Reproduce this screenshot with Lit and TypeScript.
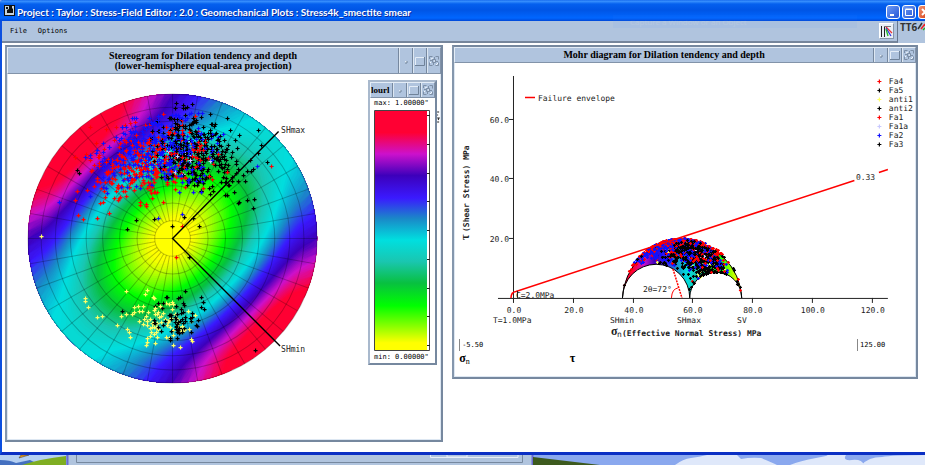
import { LitElement, html, svg, css } from "lit";
import { customElement } from "lit/decorators.js";

type Stop = [number, string];

/* Dilation tendency colour scale, from 0 (yellow) to 1 (red). */
const SCALE: Stop[] = [
  [0, "#ffff00"], [0.03, "#ffff00"], [0.1, "#88ff00"], [0.185, "#00ff00"],
  [0.28, "#08c040"], [0.37, "#1ac6b0"], [0.46, "#00dfdf"], [0.55, "#1a88c8"],
  [0.636, "#3a1aff"], [0.73, "#3d00bb"], [0.82, "#cc11cc"], [0.91, "#ff0033"],
  [1, "#ff0033"],
];

const channels = (c: string) => [1, 3, 5].map((i) => parseInt(c.slice(i, i + 2), 16));

function colourAt(v: number): string {
  for (let i = 1; i < SCALE.length; i++) {
    const [hi, ch] = SCALE[i];
    const [lo, cl] = SCALE[i - 1];
    if (v <= hi) {
      const t = (v - lo) / (hi - lo);
      const a = channels(cl);
      const b = channels(ch);
      return `rgb(${a.map((x, k) => Math.round(x + (b[k] - x) * t)).join(",")})`;
    }
  }
  return "#ff0033";
}

/* Stereonet geometry: equal-area, lower hemisphere. */
const CX = 172.5;
const CY = 238.5;
const R = 144.5;

/* Principal effective stresses, MPa. */
const SV = 76.2;
const SHMAX = 58.8;
const SHMIN = 36.3;
const RATIO = (SV - SHMAX) / (SV - SHMIN);

function contour(v: number): string {
  const pts: string[] = [];
  for (let d = 0; d < 360; d += 3) {
    const a = (d * Math.PI) / 180;
    const m = Math.cos(a - Math.PI / 4) ** 2;
    const q = v / (m + (1 - m) * RATIO);
    const rho = q >= 1 ? 1 : Math.sqrt(1 - Math.sqrt(1 - q));
    pts.push(`${(CX + R * rho * Math.cos(a)).toFixed(1)} ${(CY + R * rho * Math.sin(a)).toFixed(1)}`);
  }
  return `M${pts.join("L")}Z`;
}

const LEVELS = Array.from({ length: 110 }, (_, i) => 0.93 - (i * 0.91) / 109);

/* Repeatable pseudo-random numbers for the sampled fault poles. */
let seed = 20117;
const rnd = () => {
  seed = (seed * 1664525 + 1013904223) % 4294967296;
  return seed / 4294967296;
};
const gauss = () => Math.sqrt(-2 * Math.log(1 - rnd())) * Math.cos(2 * Math.PI * rnd());

interface Pole { x: number; y: number; c: string }

function cluster(n: number, c: string, x: number, y: number, sx: number, sy: number, tilt = 0): Pole[] {
  return Array.from({ length: n }, () => {
    const u = Math.max(-2.3, Math.min(2.3, gauss()));
    const w = Math.max(-2, Math.min(2, gauss()));
    return { c, x: Math.round(x + u * sx), y: Math.round(y + w * sy + u * tilt) };
  });
}

const RED = "#ff0000";
const BLUE = "#1010ff";
const BLACK = "#000000";
const PALE = "#c8c8ff";
const YELLOW = "#ffff66";

const POLES: Pole[] = [];
for (let i = 0; i < 12; i++) {
  POLES.push(
    ...cluster(16, RED, 152, 154, 27, 19, -4),
    ...cluster(10, RED, 130, 177, 24, 16, -5),
    ...cluster(24, BLUE, 160, 150, 25, 17, -2),
    ...cluster(6, BLUE, 127, 158, 20, 16, -3),
    ...cluster(16, BLACK, 184, 150, 15, 15, 2),
    ...cluster(15, BLACK, 210, 154, 21, 20, 7),
    ...cluster(1, PALE, 184, 160, 12, 12),
  );
}
POLES.push(
  ...cluster(30, BLUE, 190, 152, 30, 20),
  ...cluster(20, RED, 195, 160, 18, 14),
  ...cluster(75, YELLOW, 158, 320, 19, 12, 3),
  ...cluster(62, BLACK, 179, 319, 11, 11),
  ...cluster(10, YELLOW, 165, 320, 12, 10, 3),
);
const SINGLES: [string, number, number][] = [
  [BLACK, 77, 170], [BLACK, 79, 173], [BLACK, 183, 105], [BLACK, 192, 104], [BLACK, 227, 118],
  [RED, 87, 190], [RED, 97, 218], [BLUE, 59, 202], [YELLOW, 41, 236], [BLACK, 127, 229],
  [BLACK, 136, 220], [BLACK, 154, 219], [BLUE, 158, 218], [BLUE, 182, 214], [BLACK, 184, 217],
  [BLACK, 172, 226], [RED, 182, 226], [BLACK, 199, 226], [BLACK, 193, 218], [RED, 271, 166],
  [BLACK, 267, 162], [BLUE, 257, 166], [BLACK, 261, 145], [BLACK, 247, 200], [RED, 176, 257],
  [BLACK, 189, 257], [BLACK, 255, 350], [BLACK, 185, 291], [BLACK, 203, 302], [YELLOW, 85, 298],
  [YELLOW, 85, 301], [YELLOW, 88, 307], [YELLOW, 147, 290], [YELLOW, 153, 297], [YELLOW, 97, 317],
  [YELLOW, 102, 316], [YELLOW, 117, 325], [BLACK, 122, 311], [YELLOW, 130, 337], [YELLOW, 146, 345],
];
POLES.push(...SINGLES.map(([c, x, y]) => ({ c, x, y })));

/* Adjacent poles of one colour share a path, which keeps the drawing order. */
function crosses(poles: Pole[], size: number) {
  const runs: { c: string; d: string }[] = [];
  for (const p of poles) {
    const x = p.x + 0.5;
    const y = p.y + 0.5;
    const d = `M${x - size} ${y}h${2 * size}M${x} ${y - size}v${2 * size}`;
    const last = runs[runs.length - 1];
    if (last && last.c === p.c) last.d += d;
    else runs.push({ c: p.c, d });
  }
  return runs.map((r) => svg`<path class="cross" stroke=${r.c} d=${r.d} />`);
}

/* Mohr diagram axes. */
const X0 = 514;
const Y0 = 298;
const UNIT = 2.99;
const mx = (s: number) => X0 + s * UNIT;
const my = (t: number) => Y0 - t * UNIT;

function mohr(p: Pole): Pole {
  const dx = (p.x - CX) / R;
  const dy = (p.y - CY) / R;
  const r2 = Math.min(1, dx * dx + dy * dy);
  const h = r2 * (2 - r2);
  const m = Math.cos(Math.atan2(dy, dx) - Math.PI / 4) ** 2;
  const a = h * m;
  const b = h * (1 - m);
  const v = 1 - h;
  const s = SHMIN * a + SHMAX * b + SV * v;
  const t = Math.sqrt(Math.max(0, SHMIN ** 2 * a + SHMAX ** 2 * b + SV ** 2 * v - s * s));
  return { c: p.c, x: Math.round(mx(s) - 0.5), y: Math.round(my(t)) };
}

/* Light symbols go first so that the dense dark sets stay readable. */
const MOHR_POLES = [
  ...POLES.filter((p) => p.c === YELLOW),
  ...POLES.filter((p) => p.c !== YELLOW),
].map(mohr);

const arc = (from: number, to: number, sweep: number) => {
  const r = ((Math.abs(to - from) / 2) * UNIT).toFixed(1);
  return `A${r} ${r} 0 0 ${sweep} ${mx(to).toFixed(1)} ${Y0}`;
};
const MOHR_AREA =
  `M${mx(SHMIN).toFixed(1)} ${Y0}` + arc(SHMIN, SV, 1) + arc(SV, SHMAX, 0) + arc(SHMAX, SHMIN, 0) + "Z";

const KEY: [string, string][] = [
  ["Fa4", RED], ["Fa5", BLACK], ["anti1", YELLOW], ["anti2", BLACK],
  ["Fa1", RED], ["Fa1a", PALE], ["Fa2", BLUE], ["Fa3", BLACK],
];

const stops = SCALE.map(([v, c]) => svg`<stop offset=${1 - v} stop-color=${c} />`).reverse();

const tools = html`
  <div class="tools">
    <button aria-label="Iconify"><svg width="13" height="14"><path d="M6 7h2v2h-2z" fill="#e4edf7" /><path d="M8 7v2h-2" stroke="#6f8299" fill="none" /></svg></button>
    <button aria-label="Maximize"><svg width="13" height="14"><path d="M2.500 11V3.500h9" stroke="#e4edf7" fill="none" /><path d="M2 11.500h9.500V3" stroke="#6f8299" fill="none" /></svg></button>
    <button aria-label="Detach"><svg width="13" height="14"><path d="M2.500 5V2.500h3M8.500 2.500h3v3M11.500 8.500v3h-3M5.500 11.500h-3v-3M5.500 5.500h3v3h-3zM3 6.500h2M9 7.500h2M7.500 3v2M6.500 9v2" stroke="#7d8fa6" fill="none" /><path d="M4 5l2-1M9 11l2-2M3.500 8v1M7 7h1" stroke="#f2f7fc" fill="none" /></svg></button>
  </div>`;

@customElement("app-root")
export class AppRoot extends LitElement {
  static styles = css`
    :host { display: block; position: relative; overflow: hidden; background: #86a9ec; font-family: "DejaVu Sans Mono", monospace; font-size: 8px; color: #000; }
    button { font: inherit; color: inherit; padding: 0; margin: 0; border: 0; background: none; display: grid; place-items: center; }
    svg { display: block; }
    .window { background: #fff; border-left: 2px solid #0b4fe0; border-bottom: 3px solid #0a2fc4; border-top-left-radius: 4px; }
    .title { display: flex; align-items: center; height: 21px; margin-left: -2px; padding-left: 4px; gap: 2px; overflow: hidden; background: linear-gradient(#0a5ce8 0, #3d95ff 1px, #0560ee 4px, #0055e5 10px, #0066ff 18px, #0048d8 21px); color: #fff; border-top-left-radius: 4px; }
    .title h1 { flex: 1; margin: 0; padding-top: 3px; font: 700 10px/14px Lato, sans-serif; text-shadow: 1px 1px 0 #0a2a9a; white-space: nowrap; }
    .caption { display: flex; gap: 2px; margin-right: -7px; padding-top: 2px; }
    .caption button { width: 14px; height: 14px; border: 1px solid #fff; border-radius: 3px; background: linear-gradient(135deg, #6f9bf5, #2456d6); }
    .caption .close { background: linear-gradient(135deg, #f0916e, #d33c15); }
    .menubar { display: flex; height: 22px; background: #b0c4de; position: relative; }
    .menus { flex: 1; display: flex; align-items: center; gap: 11px; padding: 0 3px 0 8px; font-size: 7px; border-bottom: 2px solid #76869c; border-right: 1px solid #66768c; }
    .menus .tool { width: 15px; height: 16px; margin-left: auto; background: #e9eff6; border: 1px solid #fff; border-right-color: #8796aa; border-bottom-color: #8796aa; }
    .logo { width: 27px; height: 22px; }
    .logo text { font: bold 10px "Open Sans", sans-serif; fill: #333; }
    .ghost { position: absolute; top: -6px; left: 611px; width: 244px; height: 13px; padding-left: 17px; box-sizing: border-box; font: 8px/14px "Open Sans", sans-serif; background: #4a90ff; color: #fff; opacity: 0.06; }
    .desk { display: flex; align-items: flex-start; gap: 9px; padding: 2px 7px 10px 3px; }
    .panel { min-width: 0; box-sizing: border-box; border: 2px solid #76889f; border-left-color: #8597ad; position: relative; box-shadow: inset 0 0 0 1px #dde7f2; }
    .stereo { flex: 438 1 0; }
    .mohr { flex: 466 1 0; }
    .head { display: flex; align-items: stretch; background: #b0c4de; border: 1px solid #8293a9; border-top-color: #e4edf7; border-left-color: #e4edf7; box-sizing: border-box; }
    .head h2 { flex: 1; margin: 0; font: bold 10px/10px "Liberation Serif", serif; text-align: center; align-self: center; white-space: nowrap; }
    .stereo .head { height: 27px; }
    .mohr .head { height: 16px; }
    .tools { display: flex; }
    .tools button { width: 14px; border-left: 1px solid #76889f; box-shadow: inset 1px 0 0 #dde7f2; }
    .plot { width: 100%; height: auto; font-size: 8px; }
    .plot text { fill: #222; }
    .strong { font-weight: bold; }
    .end { text-anchor: end; }
    .mid { text-anchor: middle; }
    .cross { fill: none; stroke-width: 1.2; }
    .greek { font: bold 12px "Liberation Serif", serif; }
    .level { stroke: none; }
    .grid { fill: none; stroke: #000; stroke-opacity: 0.24; }
    .ink { fill: none; stroke: #222; }
    .fault { fill: none; stroke: #f00; stroke-width: 1.5; }
    .thin { stroke-width: 1; }
    .colours { position: absolute; left: 361px; top: 33px; width: 69px; box-sizing: border-box; border: 2px solid #76889f; border-top-color: #a9b9cd; border-left-color: #a9b9cd; background: #fff; }
    .stereo .colours .head { height: 16px; }
    .colours h2 { text-align: left; font-size: 9px; }
    .colours p { margin: 0; padding-left: 4px; font-size: 7px; line-height: 11px; white-space: nowrap; }
    .foot { display: flex; flex-wrap: wrap; height: 38px; align-content: flex-start; padding: 0 29px 0 5px; box-sizing: border-box; justify-content: space-between; }
    .foot input { width: 30px; height: 12px; padding: 0 0 0 2px; border: 0; border-left: 1px solid #888; font: 7px "DejaVu Sans Mono", monospace; color: #000; background: none; box-sizing: border-box; }
    .symbols { flex: 1 0 100%; display: flex; gap: 100px; font: bold 12px/14px "Liberation Serif", serif; }
    .symbols sub { font-size: 8px; line-height: 8px; vertical-align: -2px; font-weight: normal; }
    .wallpaper { width: 100%; height: 10px; }
  `;

  private stereogram() {
    const rings = [10, 20, 30, 40, 50, 60, 70, 80].map((d) => R * Math.SQRT2 * Math.sin((d * Math.PI) / 360));
    let spokes = "";
    for (let d = 0; d < 360; d += 10) {
      const c = Math.cos((d * Math.PI) / 180);
      const s = Math.sin((d * Math.PI) / 180);
      const from = d % 90 === 0 ? 0 : rings[0];
      spokes += `M${CX + c * from} ${CY + s * from}L${CX + c * R} ${CY + s * R}`;
    }
    return svg`
      <circle cx=${CX} cy=${CY} r=${R} fill="#ff0033" />
      ${LEVELS.map((v) => svg`<path class="level" d=${contour(v)} fill=${colourAt(v)} />`)}
      <g class="grid">
        ${rings.map((r) => svg`<circle cx=${CX} cy=${CY} r=${r} />`)}
        <path d=${spokes} />
        <circle cx=${CX} cy=${CY} r=${R} />
      </g>
      ${crosses(POLES, 2)}
      <path d="M278.500 131.500L172.500 238.500L280 346" fill="none" stroke="#000" stroke-width="1.400" />
      <text x="281" y="133">SHmax</text>
      <text x="281" y="352">SHmin</text>
      <path class="ink" d="M437 112h2M437 115h1M437 118h2l-1 2M437 122h2" />`;
  }

  private mohrPlot() {
    const ticks = [20, 40, 60, 80, 100, 120];
    return svg`
      <defs>
        <linearGradient id="m" gradientUnits="userSpaceOnUse" x1=${mx(SHMIN)} x2=${mx(SV)} y1="0" y2="0">${stops}</linearGradient>
      </defs>
      <path class="ink" d="M513.500 76V303M498 298.500H888" />
      ${ticks.map((t) => svg`<path class="ink" d=${`M${Math.round(mx(t)) - 0.5} 298v5`} />`)}
      ${[20, 40, 60].map((t) => svg`
        <path class="ink" d=${`M509 ${Math.round(my(t)) + 0.5}h5`} />
        <text class="end" x="509" y=${Math.round(my(t)) + 4}>${t}.0</text>`)}
      ${[0, ...ticks].map((t) => svg`<text class="mid" x=${Math.round(mx(t))} y="313">${t}.0</text>`)}
      <path d=${MOHR_AREA} fill="url(#m)" stroke="#000" stroke-width="1" />
      ${crosses(MOHR_POLES, 1.5)}
      <path class="fault" d="M511 298Q511 292 516 291.500L854.500 180.500M879 172.500L888 169.500" />
      <text x="856" y="180">0.33</text>
      <path class="fault" d="M673 269L682 298" stroke-dasharray="2 1" />
      <path class="fault thin" d="M671.500 298Q672 289 678 288" />
      <text x="643" y="292">2θ=72°</text>
      <path class="fault" d="M525 97.500h10" />
      <text x="538" y="101">Failure envelope</text>
      <text x="516" y="298">C=2.0MPa</text>
      <path class="ink" d="M517.500 291v7" />
      <text x="493" y="323">T=1.0MPa</text>
      <text class="mid" x="622" y="323">SHmin</text>
      <text class="mid" x="689" y="323">SHmax</text>
      <text class="mid" x="742" y="323">SV</text>
      <text x="611" y="335" class="greek">σ</text>
      <text x="617" y="337">n</text>
      <text x="622" y="336" class="strong">(Effective Normal Stress) MPa</text>
      <g transform="translate(469 240) rotate(-90)">
        <text class="greek">τ</text>
        <text class="strong" x="8">(Shear Stress) MPa</text>
      </g>
      ${KEY.map(([name, c], i) => svg`
        <path class="cross" stroke=${c} d=${`M877.5 ${81.5 + i * 9}h4M879.5 ${79.5 + i * 9}v4`} />
        <text x="889" y=${84 + i * 9}>${name}</text>`)}`;
  }

  render() {
    return html`
      <main class="window">
        <header class="title">
          <svg width="11" height="11"><path d="M0 0h11v11H0z" fill="#111" /><path d="M1 1h4v3l-2 1v3h6V4L8 3V1h2v9H1z" fill="#c8d4dc" /><path d="M2 2h2v2H2zM5 5h2v2H5z" fill="#111" /></svg>
          <h1>Project : Taylor : Stress-Field Editor : 2.0 : Geomechanical Plots : Stress4k_smectite smear</h1>
          <div class="caption">
            <button aria-label="Minimize"><svg width="10" height="10"><path d="M2 7h4v2H2z" fill="#fff" /></svg></button>
            <button aria-label="Maximize"><svg width="10" height="10"><path d="M1.500 2.500h7v6h-7zM1.500 2h7" stroke="#fff" fill="none" /></svg></button>
            <button class="close" aria-label="Close"><svg width="10" height="10"><path d="M2 2l6 6M8 2L2 8" stroke="#fff" stroke-width="2" /></svg></button>
          </div>
        </header>
        <nav class="menubar">
          <div class="menus">
            <button>File</button>
            <button>Options</button>
            <button class="tool" aria-label="Plot"><svg width="13" height="13"><path d="M1.500 1v11M4.500 1v11" stroke="#222" /><path d="M4 1.500h7" stroke="#777" /><path d="M6 2l6 6" stroke="#e33" stroke-width="1.300" /><path d="M6 3l5 8" stroke="#33d" stroke-width="1.300" /><path d="M6 4l2 7" stroke="#2b2" stroke-width="1.300" /></svg></button>
          </div>
          <svg class="logo" viewBox="0 0 27 22">
            <text x="2" y="10">TT6</text>
            <path d="M20 8L24 2" stroke="#333" stroke-width="1.500" /><path d="M23 8l4-5" stroke="#e22" stroke-width="1.500" /><path d="M25 9l2-2" stroke="#2a2" stroke-width="1.500" />
          </svg>
          <span class="ghost" aria-hidden="true">Capture a Window or an Object</span>
        </nav>
        <div class="desk">
          <section class="panel stereo">
            <div class="head">
              <h2>Stereogram for Dilation tendency and depth<br />(lower-hemisphere equal-area projection)</h2>
              ${tools}
            </div>
            <svg class="plot" viewBox="7 74 434 366">${this.stereogram()}</svg>
            <aside class="colours">
              <div class="head"><h2>lourl</h2>${tools}</div>
              <p>max: 1.00000"</p>
              <svg width="64" height="243" viewBox="370 108 64 243">
                <defs><linearGradient id="c" x1="0" x2="0" y1="0" y2="1">${stops}</linearGradient></defs>
                <path d="M374.500 109.500h55v240h-55z" fill="#fff" stroke="#444" />
                <path d="M375 110h52v239h-52z" fill="url(#c)" />
                ${Array.from({ length: 9 }, (_, i) => svg`<path class="ink" d=${`M427 ${114.5 + Math.round(i * 28.75)}h3`} />`)}
              </svg>
              <p>min: 0.00000"</p>
            </aside>
          </section>
          <section class="panel mohr">
            <div class="head">
              <h2>Mohr diagram for Dilation tendency and depth</h2>
              ${tools}
            </div>
            <svg class="plot" viewBox="454 63 462 276">${this.mohrPlot()}</svg>
            <div class="foot">
              <input aria-label="Minimum normal stress" value="-5.50" />
              <input aria-label="Maximum normal stress" value="125.00" />
              <div class="symbols"><span>σ<sub>n</sub></span><span>τ</span></div>
            </div>
          </section>
        </div>
      </main>
      <svg class="wallpaper" viewBox="0 455 925 10" preserveAspectRatio="none">
        <path d="M0 455h925v10H0z" fill="#8aa8ee" />
        <path d="M0 455h66v10H0z" fill="#b4cff2" />
        <path d="M0 460q10 0 16 3l14-3 10 5H0z" fill="#4470c0" />
        <path d="M22 465Q40 459 66 456v9z" fill="#7fae22" />
        <path d="M19 458l10-3h-8z" fill="#f0a020" stroke="#333" stroke-width="0.500" />
        <path d="M67 455h466v10H67z" fill="#b0c4de" />
        <path d="M67.500 455v10M532.500 455v10" stroke="#6a6ad0" stroke-width="2" fill="none" />
        <path d="M76.500 455v7.500H522.500V455" stroke="#76889f" fill="none" />
        <path d="M430.500 455v2.500H518V455M447 455v2h20v-2" stroke="#e9eff6" fill="none" />
        <path d="M533 457L600 465H533z" fill="#3d5a1e" />
        <path d="M675 465q8-6 16-7t16-3h30l4 4q10-2 20-1 10 4 16 7zM790 465q10-4 26-7t10-3h20q-4 6 6 5t12 5zM862 465q6-8 20-8 10-2 43-2v10z" fill="#dfe8fa" />
      </svg>
    `;
  }
}
